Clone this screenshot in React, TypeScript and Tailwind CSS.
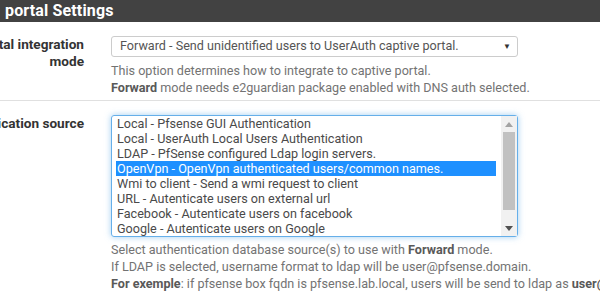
import React from 'react';

const sources = [
  'Local - Pfsense GUI Authentication',
  'Local - UserAuth Local Users Authentication',
  'LDAP - PfSense configured Ldap login servers.',
  'OpenVpn - OpenVpn authenticated users/common names.',
  'Wmi to client - Send a wmi request to client',
  'URL - Autenticate users on external url',
  'Facebook - Autenticate users on facebook',
  'Google - Autenticate users on Google',
];

const selectedIndex = 3;

const Label: React.FC<{ children: React.ReactNode }> = ({ children }) => (
  <div className="w-[200px] ml-[-116px] shrink-0 text-right text-[13.6px] leading-[17px] font-bold text-[#333333]">
    {children}
  </div>
);

export default function App() {
  return (
    <div className="w-[600px] h-[294px] overflow-hidden bg-white font-['Roboto',sans-serif]">
      <div className="h-[22px] bg-[#424242] pl-[5px] text-[16px] leading-[22px] font-bold text-white tracking-[0.15px]">
        portal Settings
      </div>

      <div className="flex pt-[14px] pb-[4px] border-b border-[#e0e0e0]">
        <Label>
          Captive portal integration
          <br />
          mode
        </Label>
        <div className="ml-[27px] flex flex-col">
          <div className="w-[407px] h-[21px] border border-[#cccccc] rounded-[3px] flex items-center justify-between pl-[8px] pr-[6px] text-[12.6px] text-[#555555]">
            <span>Forward - Send unidentified users to UserAuth captive portal.</span>
            <span className="text-[8px] text-[#333333]">▼</span>
          </div>
          <div className="mt-[5px] text-[12.6px] leading-[17px] text-[#737373] whitespace-nowrap">
            <div>This option determines how to integrate to captive portal.</div>
            <div>
              <b className="text-[#595959]">Forward</b> mode needs e2guardian package enabled with DNS auth selected.
            </div>
          </div>
        </div>
      </div>

      <div className="flex pt-[14px]">
        <Label>Authentication source</Label>
        <div className="ml-[27px] flex flex-col">
          <div className="w-[407px] h-[122px] border border-[#66afe9] rounded-[3px] shadow-[0_0_6px_rgba(102,175,233,0.6)] flex">
            <div className="flex-1 pl-[4px] pr-[5px] text-[12.6px] leading-[15px] text-[#4a4a4a]">
              {sources.map((s, i) => (
                <div
                  key={s}
                  className={
                    i === selectedIndex
                      ? 'pl-[1px] whitespace-nowrap bg-[#1e90ff] text-white'
                      : 'pl-[1px] whitespace-nowrap'
                  }
                >
                  {s}
                </div>
              ))}
            </div>
            <div className="w-[16px] bg-[#f1f1f1] flex flex-col items-center">
              <div className="h-[16px] flex items-center justify-center">
                <svg width="8" height="5" viewBox="0 0 8 5">
                  <path d="M0 5 L4 0 L8 5 Z" fill="#a3a3a3" />
                </svg>
              </div>
              <div className="w-[12px] h-[78px] bg-[#c1c1c1]" />
              <div className="flex-1" />
              <div className="h-[16px] flex items-center justify-center">
                <svg width="8" height="5" viewBox="0 0 8 5">
                  <path d="M0 0 L8 0 L4 5 Z" fill="#505050" />
                </svg>
              </div>
            </div>
          </div>
          <div className="mt-[4px] text-[12.6px] leading-[17px] text-[#737373] whitespace-nowrap">
            <div>
              Select authentication database source(s) to use with <b className="text-[#595959]">Forward</b> mode.
            </div>
            <div>If LDAP is selected, username format to ldap will be user@pfsense.domain.</div>
            <div>
              <b className="text-[#595959]">For exemple</b>: if pfsense box fqdn is pfsense.lab.local, users will be send to ldap as{' '}
              <b className="text-[#595959]">user@pfsense.lab.local</b>
            </div>
          </div>
        </div>
      </div>
    </div>
  );
}
